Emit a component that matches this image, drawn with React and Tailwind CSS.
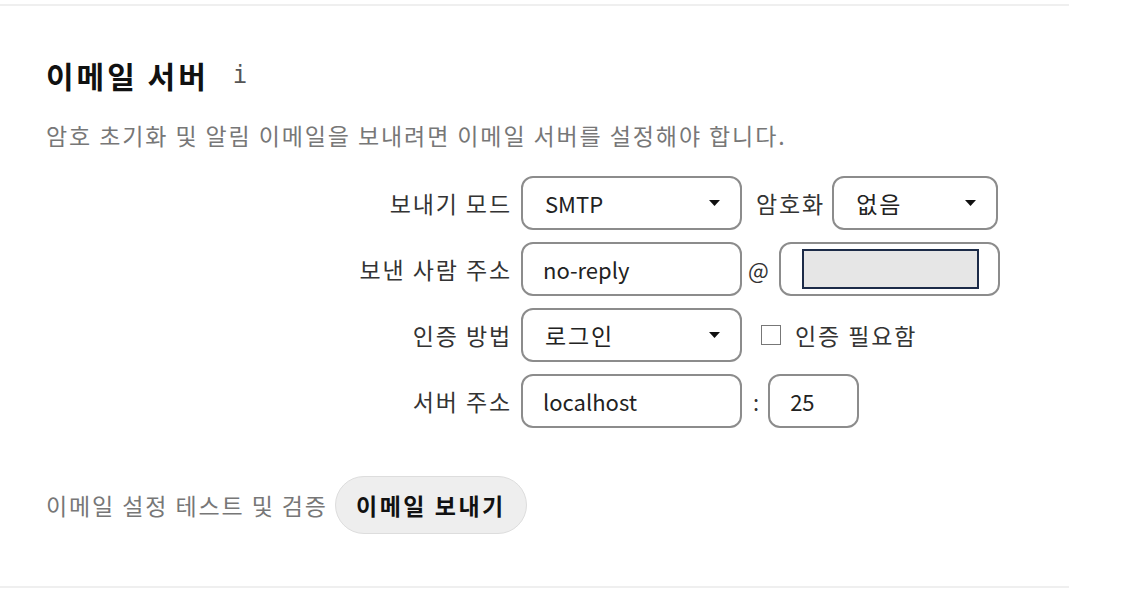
import { useState } from 'react';

function Caret() {
  return (
    <svg width="11" height="6" viewBox="0 0 11 6" aria-hidden="true">
      <path d="M0 0h11L5.5 6z" fill="#111" />
    </svg>
  );
}

function SelectBox({ value, width, korean }) {
  return (
    <div
      className={`flex items-center justify-between h-[54px] ${width} border-2 border-[#8c8c8c] rounded-[12px] bg-white pl-[22px] pr-[20px] text-[#222]`}
    >
      <span className={korean ? 'text-[23px] tracking-[1.9px]' : 'text-[22px]'}>{value}</span>
      <Caret />
    </div>
  );
}

function TextBox({ value, width }) {
  return (
    <div
      className={`flex items-center h-[54px] ${width} border-2 border-[#8c8c8c] rounded-[12px] bg-white pl-[20px] text-[22px] text-[#222]`}
    >
      {value}
    </div>
  );
}

function Label({ children }) {
  return (
    <div className="w-[475px] text-right pr-[9px] text-[23px] tracking-[1.9px] text-[#333]">
      {children}
    </div>
  );
}

export default function App() {
  const [needAuth, setNeedAuth] = useState(false);

  return (
    <div
      className="bg-white min-h-[592px] pt-[4px]"
      style={{ fontFamily: '"Noto Sans CJK KR", "Noto Sans", sans-serif' }}
    >
      <div className="w-[1069px] border-t-2 border-b-2 border-[#efefef] pl-[46px] pt-[49px] pb-[52px]">
        {/* Section title */}
        <div className="flex items-center">
          <h2 className="text-[30px] font-bold text-[#111] leading-[40px] tracking-[3px]">
            이메일 서버
          </h2>
          <span
            className="ml-[24px] text-[24px] text-[#555]"
            style={{ fontFamily: '"DejaVu Sans Mono", monospace' }}
          >
            i
          </span>
        </div>
        <p className="mt-[25px] text-[23px] tracking-[1.9px] text-[#777] leading-[30px]">
          암호 초기화 및 알림 이메일을 보내려면 이메일 서버를 설정해야 합니다.
        </p>

        {/* Form */}
        <div className="mt-[26px] flex flex-col gap-[12px]">
          <div className="flex items-center">
            <Label>보내기 모드</Label>
            <SelectBox value="SMTP" width="w-[221px]" />
            <span className="ml-[14px] mr-[7px] text-[23px] tracking-[1.9px] text-[#333]">암호화</span>
            <SelectBox value="없음" width="w-[166px]" korean />
          </div>

          <div className="flex items-center">
            <Label>보낸 사람 주소</Label>
            <TextBox value="no-reply" width="w-[221px]" />
            <span className="ml-[6px] mr-[10px] text-[22px] text-[#333]">@</span>
            <div className="flex items-center h-[54px] w-[221px] border-2 border-[#8c8c8c] rounded-[12px] bg-white pl-[21px]">
              <div className="w-[177px] h-[40px] bg-[#e6e6e6] border-2 border-[#1c2b48]" />
            </div>
          </div>

          <div className="flex items-center">
            <Label>인증 방법</Label>
            <SelectBox value="로그인" width="w-[221px]" korean />
            <label className="ml-[19px] flex items-center gap-[14px] text-[23px] tracking-[1.9px] text-[#333] cursor-pointer">
              <input
                type="checkbox"
                checked={needAuth}
                onChange={(e) => setNeedAuth(e.target.checked)}
                className="appearance-none w-[20px] h-[20px] border border-[#777] bg-white"
              />
              인증 필요함
            </label>
          </div>

          <div className="flex items-center">
            <Label>서버 주소</Label>
            <TextBox value="localhost" width="w-[221px]" />
            <span className="ml-[11px] mr-[9px] text-[22px] text-[#333]">:</span>
            <TextBox value="25" width="w-[91px]" />
          </div>
        </div>

        {/* Test */}
        <div className="mt-[48px] flex items-center">
          <span className="text-[23px] tracking-[1.9px] text-[#777]">이메일 설정 테스트 및 검증</span>
          <button className="ml-[7px] h-[58px] w-[192px] rounded-full bg-[#eeeeee] border border-[#dddddd] text-[23px] tracking-[2.5px] font-bold text-[#111]">
            이메일 보내기
          </button>
        </div>
      </div>
    </div>
  );
}
